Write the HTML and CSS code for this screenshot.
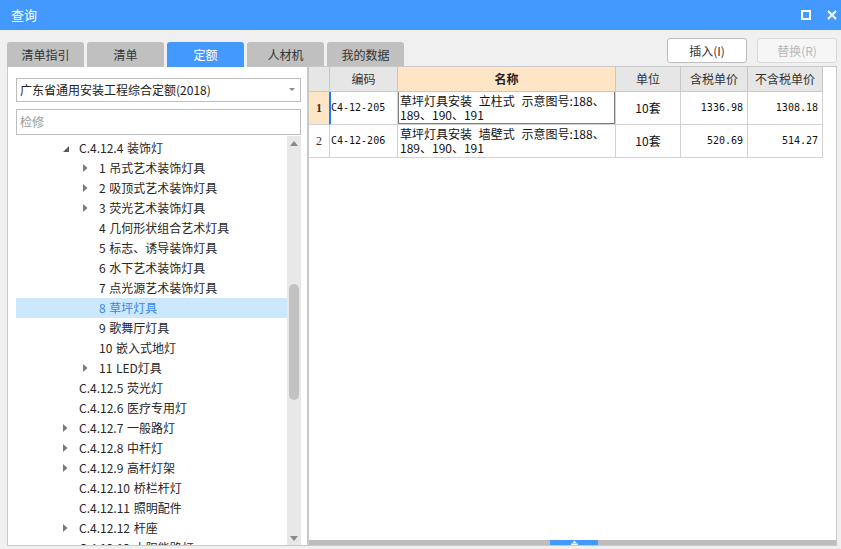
FILE: index.html
```html
<!DOCTYPE html>
<html lang="zh-CN">
<head>
<meta charset="utf-8">
<title>查询</title>
<link rel="stylesheet" href="styles.css">
</head>
<body>
<div class="window">
  <header class="titlebar">
    <span class="title">查询</span>
    <div class="win-ctrls">
      <svg class="ic" width="10" height="10" viewBox="0 0 10 10"><rect x="1" y="1" width="8" height="8" fill="none" stroke="#fff" stroke-width="2"/></svg>
      <svg class="ic" width="10" height="10" viewBox="0 0 10 10"><path d="M1 1L9 9M9 1L1 9" stroke="#fff" stroke-width="2"/></svg>
    </div>
  </header>

  <div class="toolbar">
    <nav class="tabs">
      <div class="tab">清单指引</div>
      <div class="tab">清单</div>
      <div class="tab active">定额</div>
      <div class="tab">人材机</div>
      <div class="tab">我的数据</div>
    </nav>
    <div class="actions">
      <button class="btn">插入(I)</button>
      <button class="btn disabled">替换(R)</button>
    </div>
  </div>

  <div class="main">
    <section class="left">
      <div class="select">
        <span>广东省通用安装工程综合定额(2018)</span>
        <svg class="caret" width="6" height="4" viewBox="0 0 6 4"><path d="M0 0H6L3 3Z" fill="#8a8a8a"/></svg>
      </div>
      <div class="search">检修</div>
      <div class="tree-wrap">
        <ul class="tree">
          <li class="row l1"><span class="arrow exp"><svg width="6" height="6" viewBox="0 0 6 6"><path d="M6 0V6H0Z" fill="#5a5a5a"/></svg></span>C.4.12.4 装饰灯</li>
          <li class="row l2"><span class="arrow"><svg width="5" height="8" viewBox="0 0 5 8"><path d="M0 0L4.5 4L0 8Z" fill="#7a7a7a"/></svg></span>1 吊式艺术装饰灯具</li>
          <li class="row l2"><span class="arrow"><svg width="5" height="8" viewBox="0 0 5 8"><path d="M0 0L4.5 4L0 8Z" fill="#7a7a7a"/></svg></span>2 吸顶式艺术装饰灯具</li>
          <li class="row l2"><span class="arrow"><svg width="5" height="8" viewBox="0 0 5 8"><path d="M0 0L4.5 4L0 8Z" fill="#7a7a7a"/></svg></span>3 荧光艺术装饰灯具</li>
          <li class="row l2"><span class="arrow"></span>4 几何形状组合艺术灯具</li>
          <li class="row l2"><span class="arrow"></span>5 标志、诱导装饰灯具</li>
          <li class="row l2"><span class="arrow"></span>6 水下艺术装饰灯具</li>
          <li class="row l2"><span class="arrow"></span>7 点光源艺术装饰灯具</li>
          <li class="row l2 selected"><span class="arrow"></span>8 草坪灯具</li>
          <li class="row l2"><span class="arrow"></span>9 歌舞厅灯具</li>
          <li class="row l2"><span class="arrow"></span>10 嵌入式地灯</li>
          <li class="row l2"><span class="arrow"><svg width="5" height="8" viewBox="0 0 5 8"><path d="M0 0L4.5 4L0 8Z" fill="#7a7a7a"/></svg></span>11 LED灯具</li>
          <li class="row l1"><span class="arrow"></span>C.4.12.5 荧光灯</li>
          <li class="row l1"><span class="arrow"></span>C.4.12.6 医疗专用灯</li>
          <li class="row l1"><span class="arrow"><svg width="5" height="8" viewBox="0 0 5 8"><path d="M0 0L4.5 4L0 8Z" fill="#7a7a7a"/></svg></span>C.4.12.7 一般路灯</li>
          <li class="row l1"><span class="arrow"><svg width="5" height="8" viewBox="0 0 5 8"><path d="M0 0L4.5 4L0 8Z" fill="#7a7a7a"/></svg></span>C.4.12.8 中杆灯</li>
          <li class="row l1"><span class="arrow"><svg width="5" height="8" viewBox="0 0 5 8"><path d="M0 0L4.5 4L0 8Z" fill="#7a7a7a"/></svg></span>C.4.12.9 高杆灯架</li>
          <li class="row l1"><span class="arrow"></span>C.4.12.10 桥栏杆灯</li>
          <li class="row l1"><span class="arrow"></span>C.4.12.11 照明配件</li>
          <li class="row l1"><span class="arrow"><svg width="5" height="8" viewBox="0 0 5 8"><path d="M0 0L4.5 4L0 8Z" fill="#7a7a7a"/></svg></span>C.4.12.12 杆座</li>
          <li class="row l1"><span class="arrow"></span>C.4.12.13 太阳能路灯</li>
        </ul>
        <div class="vscroll">
          <svg class="sarrow" width="8" height="5" viewBox="0 0 8 5"><path d="M0 5L4 0L8 5Z" fill="#8a8a8a"/></svg>
          <div class="track"><div class="thumb"></div></div>
          <svg class="sarrow" width="8" height="5" viewBox="0 0 8 5"><path d="M0 0H8L4 5Z" fill="#8a8a8a"/></svg>
        </div>
      </div>
    </section>

    <section class="right">
      <div class="grid">
        <div class="c hd"></div>
        <div class="c hd center">编码</div>
        <div class="c hd center active-col"><b>名称</b></div>
        <div class="c hd center">单位</div>
        <div class="c hd center">含税单价</div>
        <div class="c hd center">不含税单价</div>

        <div class="c num sel">1</div>
        <div class="c code sel">C4-12-205</div>
        <div class="c name focus">草坪灯具安装 立柱式 示意图号:188、<br>189、190、191</div>
        <div class="c unit">10套</div>
        <div class="c price">1336.98</div>
        <div class="c price">1308.18</div>

        <div class="c num">2</div>
        <div class="c code">C4-12-206</div>
        <div class="c name">草坪灯具安装 墙壁式 示意图号:188、<br>189、190、191</div>
        <div class="c unit">10套</div>
        <div class="c price">520.69</div>
        <div class="c price">514.27</div>
      </div>
      <div class="fill"></div>
      <div class="splitter">
        <div class="handle"><svg width="9" height="5" viewBox="0 0 9 5"><path d="M2.5 3L4.5 0.5L6.5 3Z M1 3.5H8V5H1Z" fill="#fff"/></svg></div>
      </div>
    </section>
  </div>
</div>
</body>
</html>
```

FILE: styles.css
```css
* { box-sizing: border-box; }

html, body {
  margin: 0;
  padding: 0;
}

body {
  width: 841px;
  height: 549px;
  overflow: hidden;
  background: #f0f0f0;
  font-family: "Noto Sans CJK SC", "Microsoft YaHei", sans-serif;
  font-size: 12px;
  color: #333;
}

.window {
  display: flex;
  flex-direction: column;
  height: 549px;
}

/* title bar */
.titlebar {
  height: 30px;
  flex: none;
  background: #4499ff;
  color: #fff;
  display: flex;
  align-items: center;
  justify-content: space-between;
  padding: 0 4px 0 11px;
}
.title {
  font-size: 13px;
  line-height: 30px;
}
.win-ctrls {
  display: flex;
  align-items: center;
  gap: 16px;
}
.ic { display: block; }

/* toolbar with tabs and buttons */
.toolbar {
  height: 37px;
  flex: none;
  display: flex;
  justify-content: space-between;
  align-items: flex-end;
  padding: 0 4px 0 7px;
}
.tabs {
  display: flex;
  gap: 3px;
}
.tab {
  width: 77px;
  height: 25px;
  line-height: 25px;
  text-align: center;
  background: #c0c0c0;
  color: #333;
  border-radius: 3px 3px 0 0;
  font-size: 12px;
}
.tab.active {
  background: #4499ff;
  color: #fff;
}
.actions {
  align-self: flex-start;
  margin-top: 8px;
  display: flex;
  gap: 10px;
}
.btn {
  width: 80px;
  height: 25px;
  padding: 0;
  background: #fff;
  border: 1px solid #bcbcbc;
  border-radius: 3px;
  font-family: inherit;
  font-size: 12px;
  line-height: 23px;
  color: #333;
}
.btn.disabled {
  background: #f6f6f6;
  border-color: #d8d8d8;
  color: #b8b8b8;
}

/* main area */
.main {
  display: flex;
  height: 479px;
  flex: none;
  padding: 0 4px 0 7px;
}

.left {
  width: 301px;
  flex: none;
  background: #fff;
  border: 1px solid #c8c8c8;
  border-top: none;
  padding: 0 6px 0 8px;
  display: flex;
  flex-direction: column;
}
.select {
  margin-top: 11px;
  height: 24px;
  border: 1px solid #bdbdbd;
  display: flex;
  align-items: center;
  justify-content: space-between;
  padding: 0 5px 0 3px;
  color: #222;
  line-height: 22px;
  font-size: 12px;
}
.caret { display: block; }
.search {
  margin-top: 7px;
  height: 26px;
  border: 1px solid #bdbdbd;
  padding-left: 3px;
  line-height: 24px;
  color: #9a9a9a;
}

.tree-wrap {
  flex: 1;
  min-height: 0;
  display: flex;
  overflow: hidden;
  margin-top: 1px;
}
.tree {
  list-style: none;
  margin: 0;
  padding: 2px 0 0;
  flex: 1;
  overflow: hidden;
}
.row {
  height: 20px;
  line-height: 20px;
  display: flex;
  align-items: center;
  white-space: nowrap;
  color: #262626;
  font-size: 12px;
  word-spacing: 1px;
}
.row.l1 { padding-left: 47px; }
.row.l2 { padding-left: 67px; }
.row.selected {
  background: #cce8ff;
  color: #3a86e0;
}
.arrow {
  width: 16px;
  flex: none;
  display: flex;
  align-items: center;
}
.arrow svg { display: block; }
.arrow.exp svg { margin-top: 1px; }

.vscroll {
  width: 14px;
  flex: none;
  background: #e8e8e8;
  display: flex;
  flex-direction: column;
  align-items: center;
  padding: 5px 0 4px;
}
.sarrow { display: block; flex: none; }
.track {
  flex: 1;
  width: 100%;
  padding: 138px 2px 0;
}
.thumb {
  height: 116px;
  border-radius: 5px;
  background: #c2c2c2;
}

/* right panel */
.right {
  flex: 1;
  margin-top: -1px;
  background: #fff;
  border: 1px solid #c8c8c8;
  display: flex;
  flex-direction: column;
}
.grid {
  display: grid;
  grid-template-columns: 21px 68px 218px 65px 67px 75px;
  grid-template-rows: 25px 33px 33px;
  width: 514px;
}
.c {
  border-right: 1px solid #d2d2d2;
  border-bottom: 1px solid #d2d2d2;
  font-size: 12px;
  color: #111;
  overflow: hidden;
  white-space: nowrap;
}
.hd {
  background: #e6e6e6;
  border-color: #c8c8c8;
  color: #333;
  line-height: 24px;
}
.hd b { font-weight: 700; color: #222; }
.center { text-align: center; }
.active-col { background: #fde5c6; }

.num {
  font-family: "Liberation Serif", serif;
  text-align: center;
  line-height: 32px;
  background: #fff;
  color: #333;
}
.num.sel {
  background: #fde5c6;
  font-weight: 700;
  border-right: 1px solid #1a7cf5;
}
.code {
  font-family: "DejaVu Sans Mono", monospace;
  font-size: 10px;
  line-height: 32px;
  padding-left: 1px;
}
.code.sel { box-shadow: inset 1px 0 #1a7cf5; }
.name {
  line-height: 14px;
  padding: 2px 0 0 2px;
  word-spacing: 4px;
  position: relative;
}
.name.focus::after {
  content: "";
  position: absolute;
  top: -1px;
  left: -1px;
  right: -1px;
  bottom: -1px;
  border: 2px solid #7d7d7d;
  border-top: 1px solid #4a9bff;
}
.unit {
  text-align: center;
  line-height: 32px;
}
.price {
  font-family: "DejaVu Sans Mono", monospace;
  font-size: 10px;
  text-align: right;
  padding-right: 4px;
  line-height: 32px;
}

.fill { flex: 1; }
.splitter {
  height: 5px;
  background: #bdbdbd;
  display: flex;
  justify-content: center;
  padding-left: 3px;
}
.handle {
  width: 48px;
  height: 5px;
  background: #4499ff;
  display: flex;
  justify-content: center;
  align-items: flex-start;
}
.handle svg { display: block; }
```
